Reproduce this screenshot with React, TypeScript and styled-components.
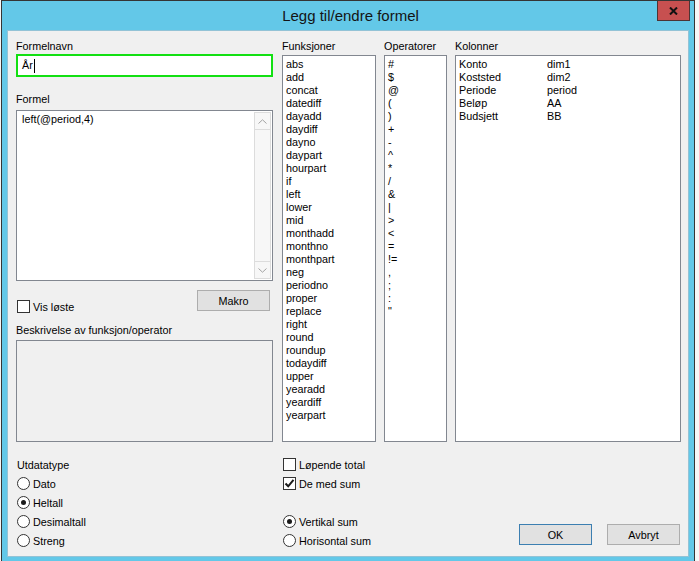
import React from 'react';
import styled, { createGlobalStyle } from 'styled-components';

const GlobalStyle = createGlobalStyle`
  html, body {
    margin: 0;
    padding: 0;
    background: #f7f7f7;
    overflow: hidden;
  }
  body {
    font-family: "Liberation Sans", Arial, sans-serif;
    font-size: 10.8px;
    color: #000;
  }
`;

const funksjoner = [
  'abs', 'add', 'concat', 'datediff', 'dayadd', 'daydiff', 'dayno', 'daypart',
  'hourpart', 'if', 'left', 'lower', 'mid', 'monthadd', 'monthno', 'monthpart',
  'neg', 'periodno', 'proper', 'replace', 'right', 'round', 'roundup',
  'todaydiff', 'upper', 'yearadd', 'yeardiff', 'yearpart',
];

const operatorer = ['#', '$', '@', '(', ')', '+', '-', '^', '*', '/', '&', '|', '>', '<', '=', '!=', ',', ';', ':', '"'];

const kolonner = [
  ['Konto', 'dim1'],
  ['Koststed', 'dim2'],
  ['Periode', 'period'],
  ['Beløp', 'AA'],
  ['Budsjett', 'BB'],
];

function App() {
  return (
    <>
      <GlobalStyle />
      <Window>
        <TitleBar>
          <span />
          <Title>Legg til/endre formel</Title>
          <CloseButton>
            <svg width="9" height="8" viewBox="0 0 9 8">
              <path d="M1 0.5 L8 7.5 M8 0.5 L1 7.5" stroke="#111" strokeWidth="2" />
            </svg>
          </CloseButton>
        </TitleBar>

        <Client>
          <Main>
            <LeftColumn>
              <Label>Formelnavn</Label>
              <NameInput>
                År<Caret />
              </NameInput>

              <Label $mt={15}>Formel</Label>
              <FormulaBox>
                <FormulaText>left(@period,4)</FormulaText>
                <ScrollBar>
                  <ScrollArrow>
                    <svg width="9" height="5" viewBox="0 0 9 5">
                      <path d="M0.5 4.5 L4.5 0.8 L8.5 4.5" fill="none" stroke="#a3a3a3" strokeWidth="1" />
                    </svg>
                  </ScrollArrow>
                  <ScrollTrack />
                  <ScrollArrow>
                    <svg width="9" height="5" viewBox="0 0 9 5">
                      <path d="M0.5 0.5 L4.5 4.2 L8.5 0.5" fill="none" stroke="#a3a3a3" strokeWidth="1" />
                    </svg>
                  </ScrollArrow>
                </ScrollBar>
              </FormulaBox>

              <ToolRow>
                <Option $self="flex-end">
                  <CheckBox />
                  Vis løste
                </Option>
                <Button>Makro</Button>
              </ToolRow>

              <Label $mt={10}>Beskrivelse av funksjon/operator</Label>
              <DescriptionBox />
            </LeftColumn>

            <ListColumn>
              <Label>Funksjoner</Label>
              <ListBox>
                {funksjoner.map((f) => (
                  <Item key={f}>{f}</Item>
                ))}
              </ListBox>
            </ListColumn>

            <ListColumn>
              <Label>Operatorer</Label>
              <ListBox>
                {operatorer.map((o) => (
                  <Item key={o}>{o}</Item>
                ))}
              </ListBox>
            </ListColumn>

            <ListColumn>
              <Label>Kolonner</Label>
              <ListBox>
                {kolonner.map(([navn, kode]) => (
                  <ColumnRow key={navn}>
                    <span>{navn}</span>
                    <span>{kode}</span>
                  </ColumnRow>
                ))}
              </ListBox>
            </ListColumn>
          </Main>

          <Bottom>
            <OptionGroup>
              <Row>Utdatatype</Row>
              <Row><Radio />Dato</Row>
              <Row><Radio $checked />Heltall</Row>
              <Row><Radio />Desimaltall</Row>
              <Row><Radio />Streng</Row>
            </OptionGroup>

            <OptionGroup>
              <Row><CheckBox />Løpende total</Row>
              <Row>
                <CheckBox>
                  <svg width="11" height="11" viewBox="0 0 11 11">
                    <path d="M1.5 5.5 L4.2 8.3 L9.5 1.8" fill="none" stroke="#1a1a1a" strokeWidth="2" />
                  </svg>
                </CheckBox>
                De med sum
              </Row>
              <Row />
              <Row><Radio $checked />Vertikal sum</Row>
              <Row><Radio />Horisontal sum</Row>
            </OptionGroup>

            <ButtonBar>
              <Button $default>OK</Button>
              <Button>Avbryt</Button>
            </ButtonBar>
          </Bottom>
        </Client>
      </Window>
    </>
  );
}

const Window = styled.div`
  width: 694px;
  height: 563px;
  box-sizing: border-box;
  margin-left: 1px;
  border: 1px solid #353535;
  background: #63c8e8;
  display: flex;
  flex-direction: column;
  padding: 0 5px 5px;
`;

const TitleBar = styled.div`
  height: 29px;
  display: grid;
  grid-template-columns: 1fr auto 1fr;
  align-items: start;
  margin-right: -5px;
`;

const Title = styled.div`
  line-height: 29px;
  font-size: 15px;
  color: #141414;
  white-space: nowrap;
`;

const CloseButton = styled.div`
  justify-self: end;
  margin-right: 4px;
  width: 33px;
  height: 20px;
  box-sizing: border-box;
  background: #c75050;
  border: 1px solid #4d3434;
  border-top: none;
  display: flex;
  align-items: center;
  justify-content: center;
`;

const Client = styled.div`
  height: 527px;
  box-sizing: border-box;
  border: 1px solid #93c3d6;
  background: #f0f0f0;
  padding: 8px 6px 0 8px;
  display: flex;
  flex-direction: column;
`;

const Main = styled.div`
  display: grid;
  grid-template-columns: 258px 94px 63px 226px;
  column-gap: 8px;
`;

const LeftColumn = styled.div`
  display: flex;
  flex-direction: column;
  padding-right: 1px;
`;

const ListColumn = styled.div`
  display: flex;
  flex-direction: column;
`;

const Label = styled.div<{ $mt?: number }>`
  height: 15px;
  line-height: 15px;
  margin-top: ${(p) => p.$mt ?? 0}px;
  white-space: nowrap;
`;

const NameInput = styled.div`
  height: 23px;
  box-sizing: border-box;
  border: 2px solid #12e012;
  background: #fff;
  padding-left: 4px;
  line-height: 19px;
  display: flex;
  align-items: center;
`;

const Caret = styled.span`
  display: inline-block;
  width: 1px;
  height: 14px;
  margin-left: 1px;
  background: #000;
`;

const FormulaBox = styled.div`
  margin-top: 3px;
  height: 171px;
  box-sizing: border-box;
  border: 1px solid #828790;
  background: #fff;
  display: flex;
`;

const FormulaText = styled.div`
  flex: 1;
  padding: 2px 5px;
  line-height: 13px;
`;

const ScrollBar = styled.div`
  width: 17px;
  margin: 1px 1px 1px 0;
  box-sizing: border-box;
  border: 1px solid #dcdcdc;
  background: #f7f7f7;
  display: flex;
  flex-direction: column;
`;

const ScrollArrow = styled.div`
  height: 16px;
  display: flex;
  align-items: center;
  justify-content: center;
  border-bottom: 1px solid #dcdcdc;

  &:last-child {
    border-bottom: none;
    border-top: 1px solid #dcdcdc;
  }
`;

const ScrollTrack = styled.div`
  flex: 1;
`;

const ToolRow = styled.div`
  margin-top: 9px;
  height: 23px;
  display: flex;
  justify-content: space-between;
`;

const Option = styled.div<{ $self?: string }>`
  align-self: ${(p) => p.$self ?? 'center'};
  display: flex;
  align-items: center;
  gap: 3px;
  margin-left: 1px;
  height: 13px;
  white-space: nowrap;
`;

const Button = styled.div<{ $default?: boolean }>`
  width: 73px;
  height: 21px;
  box-sizing: border-box;
  background: #e1e1e1;
  border: 1px solid ${(p) => (p.$default ? '#3c7fb1' : '#adadad')};
  display: flex;
  align-items: center;
  justify-content: center;
  margin-right: 3px;
`;

const DescriptionBox = styled.div`
  margin-top: 2px;
  height: 102px;
  box-sizing: border-box;
  border: 1px solid #828790;
  background: #f0f0f0;
`;

const ListBox = styled.div`
  margin-top: 1px;
  height: 387px;
  box-sizing: border-box;
  border: 1px solid #828790;
  background: #fff;
  padding: 2px 3px;
  overflow: hidden;
`;

const Item = styled.div`
  height: 13px;
  line-height: 13px;
  white-space: nowrap;
`;

const ColumnRow = styled(Item)`
  display: grid;
  grid-template-columns: 88px 1fr;
`;

const Bottom = styled.div`
  margin-top: 13px;
  display: grid;
  grid-template-columns: 258px 165px 226px;
  column-gap: 8px;
`;

const OptionGroup = styled.div`
  display: flex;
  flex-direction: column;
`;

const Row = styled.div`
  height: 19px;
  display: flex;
  align-items: center;
  gap: 3px;
  padding-left: 1px;
  white-space: nowrap;
`;

const CheckBox = styled.span`
  width: 13px;
  height: 13px;
  box-sizing: border-box;
  border: 1px solid #333;
  background: #fff;
  display: inline-flex;
  align-items: center;
  justify-content: center;
  flex-shrink: 0;
`;

const Radio = styled.span<{ $checked?: boolean }>`
  width: 13px;
  height: 13px;
  box-sizing: border-box;
  border: 1px solid #333;
  border-radius: 50%;
  background: #fff;
  display: inline-flex;
  align-items: center;
  justify-content: center;
  flex-shrink: 0;

  &::after {
    content: '';
    display: ${(p) => (p.$checked ? 'block' : 'none')};
    width: 5px;
    height: 5px;
    border-radius: 50%;
    background: #1a1a1a;
  }
`;

const ButtonBar = styled.div`
  display: flex;
  justify-content: flex-end;
  align-items: flex-end;
  gap: 14px;
  padding-bottom: 5px;

  & > div {
    margin-right: 1px;
  }
`;

export default App;
